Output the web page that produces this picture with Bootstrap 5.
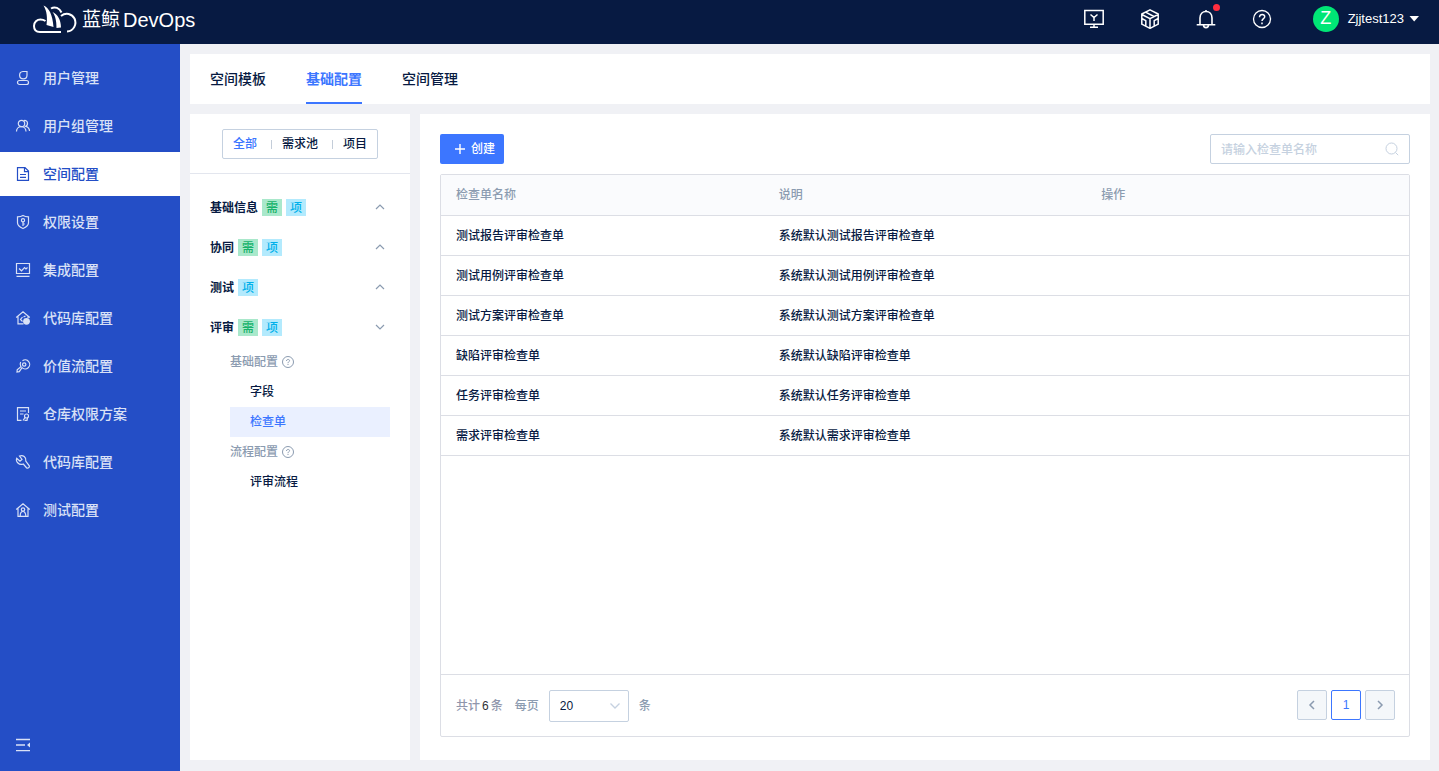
<!DOCTYPE html>
<html lang="zh-CN">
<head>
<meta charset="utf-8">
<meta name="viewport" content="width=device-width, initial-scale=1">
<title>蓝鲸DevOps - 空间配置</title>
<link href="https://cdn.jsdelivr.net/npm/bootstrap@5.3.0/dist/css/bootstrap.min.css" rel="stylesheet">
<style>
:root{--ink:#071a42;--brand:#3c76ff;--muted:#8b9bb0;--line:#dcdee5;--field:#c5d1e0;--side:#244ec6}
body{font-family:"Liberation Sans","Noto Sans CJK SC",sans-serif;font-size:12px;font-weight:500;line-height:20px;color:var(--ink);background:#f0f1f5}
svg{display:block;flex:none;fill:none;stroke:currentColor}
a{text-decoration:none;color:inherit}
.topbar{height:44px;background:#071a42;padding:0 19px 6px 32px;color:#fff}
.brand-name{font-size:20px;font-weight:400;line-height:38px;gap:3px;padding-top:2px}
.brand-cn{font-size:19px}
.tool-set{gap:36px}
.icon-button{border:0;background:none;padding:0;color:inherit}
.alert-dot{position:absolute;top:-5px;right:-4px;width:7px;height:7px;border-radius:50%;background:#ff2d3f}
.user-menu{margin-left:41px;gap:9px;font-size:13px}
.avatar-disc{width:26px;height:26px;border-radius:50%;background:#00e676;font-size:18px;line-height:24px;font-weight:400}
.side-menu{width:180px;background:var(--side);padding:12px 0 16px;gap:4px;flex:none;color:#d9e1f6}
.side-menu .nav-link{height:44px;padding:0 15px;gap:12px;font-size:14px;color:inherit;border-radius:0}
.side-menu .nav-link svg{stroke-width:1.2}
.side-menu .nav-link.active{background:#fff;color:var(--side)}
.workspace{padding:10px 9px 11px 10px;gap:10px;min-width:0}
.tab-strip{padding:0 20px;gap:40px;background:#fff}
.tab-strip .nav-link{padding:15px 0 13px;font-size:14px;line-height:20px;color:var(--ink);border-bottom:2px solid transparent}
.tab-strip .nav-link.active{color:var(--brand);border-color:var(--brand);font-weight:700}
.panes{gap:10px;min-height:0}
.tree-pane{width:220px;flex:none}
.scope-head{padding:15px 0 14px;border-bottom:1px solid #e3e6ee}
.scope-switch{height:30px;border:1px solid var(--field);border-radius:2px;gap:4px}
.scope-switch button{padding:0 10px;border:0;background:none;color:var(--ink);font-weight:500}
.scope-switch button.active{color:var(--brand)}
.scope-switch i{width:1px;height:9px;background:#c4cdd9;margin-right:-4px}
.tree{padding:13px 20px}
.tree-row{height:40px;width:100%;padding:0 5px 0 0;gap:4px;border:0;background:none;font-weight:700;color:var(--ink)}
.row-name{padding-top:2px}
.kind{width:20px;height:17px;line-height:18px;font-weight:500;text-align:center}
.kind-req{background:#a9e8cb;color:#17b26a}
.kind-proj{background:#b3eafd;color:#00b0ea}
.tree-row svg{color:#8b9bb0}
.tree-sub{padding-left:20px}
.tree-sub>*{height:30px;line-height:30px}
.sub-title{color:var(--muted);gap:4px}
.sub-link{padding-left:20px}
.sub-link.active{background:#eaf0ff;color:var(--brand)}
.list-pane{padding:20px 20px 23px;gap:10px;min-width:0}
.create-button{width:64px;height:30px;padding:0 0 0 5px;gap:5px;font-size:12px;font-weight:500;border:0;border-radius:2px;background:var(--brand);color:#fff}
.search-box{width:200px;height:30px}
.search-box input{height:30px;padding:2px 34px 0 10px;font-size:12px;font-weight:500;border-color:var(--field);border-radius:2px}
.search-box input::placeholder{color:#c5d1e0;opacity:1}
.search-box svg{position:absolute;right:11px;top:8px;color:#c5d1e0}
.sheet{border:1px solid var(--line);border-radius:2px;min-height:0}
.checklists{table-layout:fixed;margin:0;color:var(--ink)}
.checklists th,.checklists td{padding:10px 15px 9px;line-height:20px;border-bottom:1px solid var(--line);color:inherit;background:none}
.checklists th{padding:10px 15px;background:#fafbfd;color:var(--muted);font-weight:500}
.sheet-foot{height:62px;padding:0 14px 0 15px;border-top:1px solid var(--line);color:var(--muted);gap:10px}
.total-count{color:#9096ac;padding-right:2px;gap:2px}
.total-count b{font-weight:400;color:#313238}
.page-size{width:80px;height:32px;padding:0 10px;font-size:12px;color:var(--ink);border-color:var(--field);border-radius:2px;background-image:url("data:image/svg+xml,%3Csvg xmlns='http://www.w3.org/2000/svg' viewBox='0 0 12 12' fill='none' stroke='%23c5d1e0' stroke-width='1.3'%3E%3Cpath d='M1.5 3.5 6 8l4.5-4.5'/%3E%3C/svg%3E");background-size:12px;background-position:right 7px center}
.pager{gap:4px;margin-bottom:2px}
.pager .page-item .page-link{width:30px;height:30px;padding:0;display:flex;align-items:center;justify-content:center;font-size:12px;border:1px solid var(--field);border-radius:2px;background:#f4f7fa;color:var(--muted);margin:0}
.pager .page-item.active .page-link{background:#fff;border-color:var(--brand);color:var(--brand)}
</style>
</head>
<body>
<div class="d-flex flex-column min-vh-100">
<header class="topbar d-flex align-items-center">
  <a href="#" class="d-flex align-items-center me-auto">
    <svg width="46" height="30" viewBox="0 0 46 30" stroke-width="2"><path d="M29 28H8C3.5 28 2 25 2 22c0-4 3-6.5 6.5-6.500 2 0 3.500.5 5 1.500M19 4.500c4-2.500 8.500-.5 10.500 4M29 12c5-4 11-2 13.500 2.500C45 20 42 27 35 27.500"/><path fill="currentColor" stroke="none" d="M11.500 1.500C17 4 20.500 10 21.500 23L14.500 21C15.500 14 15 7 11.500 1.500ZM20.500 8c5 2 8.500 8 8.500 15.500L24.500 24C24.500 17 23.500 12 20.500 8Z"/></svg>
    <span class="brand-name d-flex ms-1"><span class="brand-cn">蓝鲸</span><span>DevOps</span></span>
  </a>
  <div class="tool-set d-flex align-items-center">
    <button class="icon-button" aria-label="控制台"><svg width="20" height="20" viewBox="0 0 20 20" stroke-width="1.5"><path d="M.8 1.500h18.400v13.700H.8zM10 15v3M6 18.200h8M6.500 5.500 10 8.500l3.500-3M10 8.500V12"/></svg></button>
    <button class="icon-button" aria-label="服务"><svg width="20" height="20" viewBox="0 0 20 20" stroke-width="1.500" stroke-linejoin="round"><path d="M10 .8 18.200 5v10.200L10 19.300 1.800 15.200V5L10 .8ZM1.800 5.500 10 9.700l8.200-4.200M10 9.700v9.500M5.500 3.200l8.500 4.300M1.800 9.500l4 2.200v5M18.200 9.500l-4 2.200v5"/></svg></button>
    <button class="icon-button position-relative" aria-label="通知"><svg width="20" height="20" viewBox="0 0 20 20" stroke-width="1.600"><path d="M4 15.500V9c0-4 2.500-6.500 6-6.500S16 5 16 9v6.500M.7 15.800h18.600M7.500 16c0 3.500 5 3.500 5 0M10 1v2"/></svg><span class="alert-dot"></span></button>
    <button class="icon-button" aria-label="帮助"><svg width="20" height="20" viewBox="0 0 20 20" stroke-width="1.300"><circle cx="10" cy="10" r="8.500"/><path stroke-width="1.500" d="M7.500 8.200C7.500 4.500 13 4.800 12.700 8c-.2 1.700-2.700 1.800-2.700 4M10 13.500v1.700"/></svg></button>
  </div>
  <button class="icon-button user-menu d-flex align-items-center">
    <span class="avatar-disc text-center">Z</span><span class="d-flex align-items-center gap-1"><span>Zjjtest123</span><svg width="12" height="8" viewBox="0 0 12 8"><path fill="currentColor" stroke="none" d="M1.500 1h9.500L6.200 6.500Z"/></svg></span>
  </button>
</header>
<div class="d-flex flex-grow-1">
<nav class="side-menu nav flex-column flex-nowrap" aria-label="管理">
  <a class="nav-link d-flex align-items-center" href="#"><svg width="16" height="16" viewBox="0 0 16 16"><path d="M8 1.500h4v3.700a3.700 3.700 0 1 1-4-3.700ZM4.500 10.500h7a2 2 0 0 1 0 4h-7a2 2 0 0 1 0-4Z"/></svg>用户管理</a>
  <a class="nav-link d-flex align-items-center" href="#"><svg width="16" height="16" viewBox="0 0 16 16"><circle cx="6.500" cy="5.500" r="3.200"/><path d="M1.500 13.500C1.500 7 11 7 11 13.500M9 2.600c4-1 4.500 4.400 1.700 5.700 2.800.8 3.800 2.500 3.800 4.700"/></svg>用户组管理</a>
  <a class="nav-link active d-flex align-items-center" aria-current="page" href="#"><svg width="16" height="16" viewBox="0 0 16 16"><path d="M2.500 1.600H10l3.500 3.500v9.300h-11zM9.500 1.600v4h4M5 8.500h6M5 11.300h6"/></svg>空间配置</a>
  <a class="nav-link d-flex align-items-center" href="#"><svg width="16" height="16" viewBox="0 0 16 16"><path d="M8 1.500c2 1.200 3.700 1.300 5.500 1.300v6c0 3-2.500 4.500-5.500 5.700-3-1.200-5.500-2.700-5.500-5.700v-6C4.300 2.800 6 2.700 8 1.500Z"/><circle cx="8" cy="6.200" r="1.600"/><path d="M8 7.800V12M8 10h1.800"/></svg>权限设置</a>
  <a class="nav-link d-flex align-items-center" href="#"><svg width="16" height="16" viewBox="0 0 16 16"><path d="M1.500 1.500h13v10h-13zM1.500 14.300h13M4 6.500l2.500 2.300 3-3.300L11 7l1.500-1.500"/></svg>集成配置</a>
  <a class="nav-link d-flex align-items-center" href="#"><svg width="16" height="16" viewBox="0 0 16 16"><path d="M1.200 7.500 8 1.800l6.800 5.700M3 6.500v7.300h5.500M13 6.500V8M7.500 7 5.500 9.500l2 2"/><circle cx="11.500" cy="11.300" r="3.400" fill="currentColor" stroke="none"/><path d="m8.500 7 2-1"/></svg>代码库配置</a>
  <a class="nav-link d-flex align-items-center" href="#"><svg width="16" height="16" viewBox="0 0 16 16"><path d="M7.500 2.800A4.500 4.500 0 1 1 7 9.600L4.300 13.700 2 14l.2-2.300 3.700-3A4.500 4.500 0 0 1 5.700 4"/><circle cx="9.200" cy="6.500" r="1.700"/></svg>价值流配置</a>
  <a class="nav-link d-flex align-items-center" href="#"><svg width="16" height="16" viewBox="0 0 16 16"><path d="M6.500 14.300h-4V1.700h11V7M5 5h6M5 8h3.500"/><circle cx="11.500" cy="10" r="2"/><path d="m10 11.500-2 3M12.500 12l-.5 2.300H9.500"/></svg>仓库权限方案</a>
  <a class="nav-link d-flex align-items-center" href="#"><svg width="16" height="16" viewBox="0 0 16 16"><path d="M4.500 2C8 .5 11.500 3 10.800 7l3.500 4.800c.7 1.700-1.500 3-2.800 1.900L8.300 10C4 11.800.5 7.500 1.700 4.200L5 7.300 7 5.500 4.500 2Z"/></svg>代码库配置</a>
  <a class="nav-link d-flex align-items-center" href="#"><svg width="16" height="16" viewBox="0 0 16 16"><path d="M1.200 7.500 8 1.800l6.800 5.700M3 6.500v7.800h10V6.500"/><circle cx="8" cy="7.500" r="1.700"/><path d="M5.200 14c0-6 5.600-6 5.600 0"/></svg>测试配置</a>
  <button class="icon-button mt-auto px-3 align-self-start" aria-label="收起菜单"><svg width="14" height="20" viewBox="0 0 14 20" stroke-width="1.300"><path d="M0 4.500h14M0 10h9M0 15.700h14"/><path fill="currentColor" stroke="none" d="M14 7.500v5L11 10Z"/></svg></button>
</nav>
<main class="workspace d-flex flex-column flex-grow-1">
  <nav class="tab-strip nav" aria-label="空间">
    <a class="nav-link" href="#">空间模板</a><a class="nav-link active" aria-current="page" href="#">基础配置</a><a class="nav-link" href="#">空间管理</a>
  </nav>
  <div class="panes d-flex flex-grow-1">
    <aside class="tree-pane bg-white">
      <div class="scope-head d-flex justify-content-center">
        <div class="scope-switch d-flex align-items-center" role="group" aria-label="范围"><button class="active">全部</button><i></i><button>需求池</button><i></i><button>项目</button></div>
      </div>
      <div class="tree">
        <button class="tree-row d-flex align-items-center"><span class="row-name">基础信息</span><span class="kind kind-req">需</span><span class="kind kind-proj">项</span><svg class="ms-auto" width="10" height="10" viewBox="0 0 10 10" stroke-width="1.200"><path d="m1 7 4-4 4 4"/></svg></button>
        <button class="tree-row d-flex align-items-center"><span class="row-name">协同</span><span class="kind kind-req">需</span><span class="kind kind-proj">项</span><svg class="ms-auto" width="10" height="10" viewBox="0 0 10 10" stroke-width="1.200"><path d="m1 7 4-4 4 4"/></svg></button>
        <button class="tree-row d-flex align-items-center"><span class="row-name">测试</span><span class="kind kind-proj">项</span><svg class="ms-auto" width="10" height="10" viewBox="0 0 10 10" stroke-width="1.200"><path d="m1 7 4-4 4 4"/></svg></button>
        <button class="tree-row d-flex align-items-center" aria-expanded="true"><span class="row-name">评审</span><span class="kind kind-req">需</span><span class="kind kind-proj">项</span><svg class="ms-auto" width="10" height="10" viewBox="0 0 10 10" stroke-width="1.200"><path d="m1 3 4 4 4-4"/></svg></button>
        <div class="tree-sub d-flex flex-column">
          <div class="sub-title d-flex align-items-center">基础配置<svg width="12" height="12" viewBox="0 0 12 12"><circle cx="6" cy="6" r="5.500"/><path d="M4.500 5c0-2.200 3.200-2 3-.2C7.400 5.900 6 5.800 6 7.200M6 8v1"/></svg></div>
          <a class="sub-link" href="#">字段</a>
          <a class="sub-link active" href="#">检查单</a>
          <div class="sub-title d-flex align-items-center">流程配置<svg width="12" height="12" viewBox="0 0 12 12"><circle cx="6" cy="6" r="5.500"/><path d="M4.500 5c0-2.200 3.200-2 3-.2C7.400 5.900 6 5.800 6 7.200M6 8v1"/></svg></div>
          <a class="sub-link" href="#">评审流程</a>
        </div>
      </div>
    </aside>
    <section class="list-pane bg-white d-flex flex-column flex-grow-1">
      <div class="d-flex justify-content-between">
        <button class="create-button btn d-flex align-items-center justify-content-center"><svg width="12" height="12" viewBox="0 0 12 12" stroke-width="1.400"><path d="M6 1v10M1 6h10"/></svg>创建</button>
        <div class="search-box position-relative"><input class="form-control" type="search" placeholder="请输入检查单名称" aria-label="检查单名称"><svg width="14" height="14" viewBox="0 0 14 14"><circle cx="6.500" cy="6.500" r="5.500"/><path d="m10.500 10.500 2.700 2.700"/></svg></div>
      </div>
      <div class="sheet d-flex flex-column flex-grow-1">
        <table class="checklists table">
          <thead><tr><th scope="col">检查单名称</th><th scope="col">说明</th><th scope="col">操作</th></tr></thead>
          <tbody>
            <tr><td>测试报告评审检查单</td><td>系统默认测试报告评审检查单</td><td></td></tr>
            <tr><td>测试用例评审检查单</td><td>系统默认测试用例评审检查单</td><td></td></tr>
            <tr><td>测试方案评审检查单</td><td>系统默认测试方案评审检查单</td><td></td></tr>
            <tr><td>缺陷评审检查单</td><td>系统默认缺陷评审检查单</td><td></td></tr>
            <tr><td>任务评审检查单</td><td>系统默认任务评审检查单</td><td></td></tr>
            <tr><td>需求评审检查单</td><td>系统默认需求评审检查单</td><td></td></tr>
          </tbody>
        </table>
        <div class="sheet-foot mt-auto d-flex align-items-center">
          <span class="total-count d-flex">共计<b>6</b>条</span>
          <label for="size">每页</label>
          <select id="size" class="page-size form-select"><option>20</option></select>
          <span>条</span>
          <ul class="pager pagination ms-auto">
            <li class="page-item"><a class="page-link" href="#" aria-label="上一页"><svg width="10" height="10" viewBox="0 0 10 10" stroke-width="1.500"><path d="M7 1 3 5l4 4"/></svg></a></li>
            <li class="page-item active"><a class="page-link" href="#">1</a></li>
            <li class="page-item"><a class="page-link" href="#" aria-label="下一页"><svg width="10" height="10" viewBox="0 0 10 10" stroke-width="1.500"><path d="m3 1 4 4-4 4"/></svg></a></li>
          </ul>
        </div>
      </div>
    </section>
  </div>
</main>
</div>
</div>
<script src="https://cdn.jsdelivr.net/npm/bootstrap@5.3.0/dist/js/bootstrap.bundle.min.js"></script>
</body>
</html>
